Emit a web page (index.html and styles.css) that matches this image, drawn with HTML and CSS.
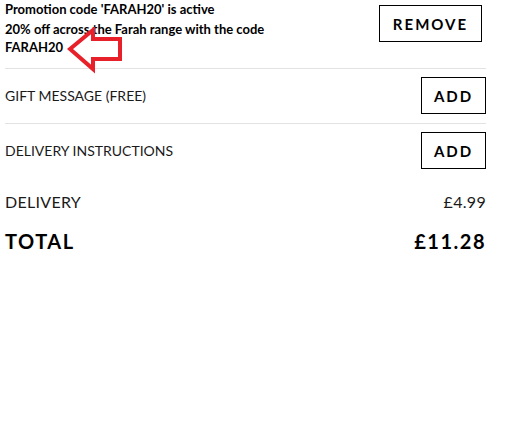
FILE: index.html
```html
<!DOCTYPE html>
<html lang="en">
<head>
<meta charset="utf-8">
<link rel="stylesheet" href="styles.css">
</head>
<body>
<div class="summary">
  <div class="promo">
    <div class="promo-text">
      <p class="promo-title">Promotion code 'FARAH20' is active</p>
      <p class="promo-desc">20% off across the Farah range with the code<br>FARAH20</p>
    </div>
    <button class="btn btn-remove">REMOVE</button>
    <svg class="arrow" width="60" height="50" viewBox="0 0 60 50">
      <polygon points="3,22 26,3 26,12 53,12 53,32 26,32 26,42" fill="none" stroke="#e8202a" stroke-width="4" stroke-linejoin="miter"/>
    </svg>
  </div>
  <div class="row">
    <span class="label">GIFT MESSAGE (FREE)</span>
    <button class="btn btn-add">ADD</button>
  </div>
  <div class="row">
    <span class="label">DELIVERY INSTRUCTIONS</span>
    <button class="btn btn-add">ADD</button>
  </div>
  <div class="line delivery">
    <span>DELIVERY</span>
    <span>£4.99</span>
  </div>
  <div class="line total">
    <span>TOTAL</span>
    <span>£11.28</span>
  </div>
</div>
</body>
</html>
```
FILE: styles.css
```css
* { box-sizing: border-box; }
body {
  margin: 0;
  background: #fff;
  font-family: Lato, "Noto Sans", sans-serif;
  color: #000;
}
.summary {
  width: 486px;
  padding-left: 5px;
}
.promo {
  position: relative;
  display: flex;
  justify-content: space-between;
  align-items: flex-start;
  padding-bottom: 12px;
}
.promo-text p {
  margin: 0;
  font-size: 13px;
  font-weight: 700;
  line-height: 18px;
}
.promo-title { margin-bottom: 2px !important; }
.btn {
  background: #fff;
  border: 1px solid #000;
  font-family: inherit;
  font-weight: 700;
  color: #000;
  padding: 0;
  cursor: pointer;
}
.btn-remove {
  margin-top: 5px;
  margin-right: 4px;
  width: 103px;
  height: 37px;
  font-size: 15px;
  letter-spacing: 2px;
}
.btn-add {
  width: 65px;
  height: 37px;
  font-size: 15px;
  letter-spacing: 2px;
}
.arrow {
  position: absolute;
  left: 62px;
  top: 27px;
}
.row {
  display: flex;
  justify-content: space-between;
  align-items: center;
  border-top: 1px solid #e2e2e2;
  padding: 8px 0 9px;
}
.label {
  font-size: 14px;
  color: #1a1a1a;
}
.line {
  display: flex;
  justify-content: space-between;
  align-items: center;
}
.delivery {
  margin-top: 12px;
  font-size: 16px;
  line-height: 24px;
  color: #1a1a1a;
  letter-spacing: 0.3px;
}
.total {
  margin-top: 13px;
  font-size: 20px;
  line-height: 28px;
  font-weight: 700;
  letter-spacing: 1.5px;
}
```
